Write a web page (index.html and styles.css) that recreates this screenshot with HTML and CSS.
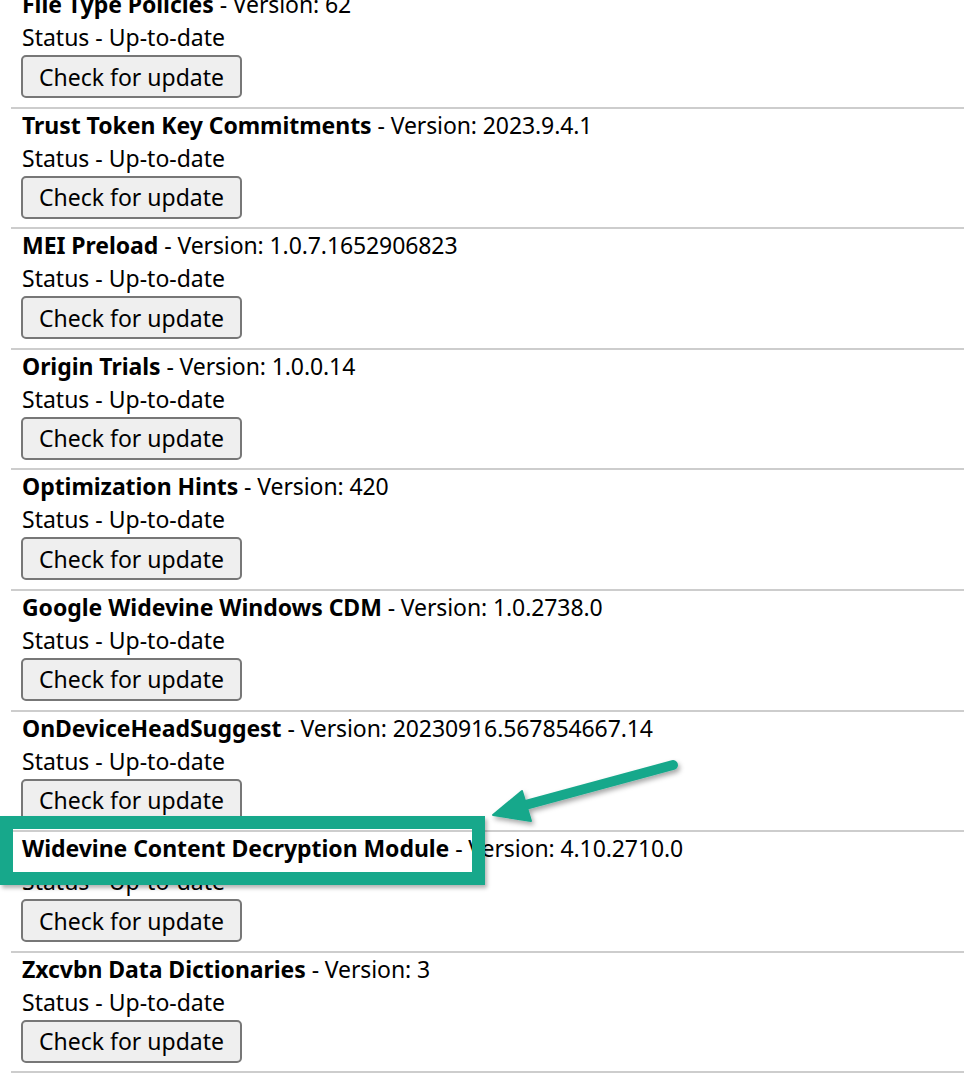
FILE: index.html
```html
<!DOCTYPE html>
<html>
<head>
<meta charset="utf-8">
<link rel="stylesheet" href="styles.css">
</head>
<body>
<div class="list">
  <div class="item">
    <div class="title"><b>File Type Policies</b> - Version: 62</div>
    <div class="status">Status - Up-to-date</div>
    <button class="btn">Check for update</button>
  </div>
  <div class="item">
    <div class="title"><b>Trust Token Key Commitments</b> - Version: 2023.9.4.1</div>
    <div class="status">Status - Up-to-date</div>
    <button class="btn">Check for update</button>
  </div>
  <div class="item">
    <div class="title"><b>MEI Preload</b> - Version: 1.0.7.1652906823</div>
    <div class="status">Status - Up-to-date</div>
    <button class="btn">Check for update</button>
  </div>
  <div class="item">
    <div class="title"><b>Origin Trials</b> - Version: 1.0.0.14</div>
    <div class="status">Status - Up-to-date</div>
    <button class="btn">Check for update</button>
  </div>
  <div class="item">
    <div class="title"><b>Optimization Hints</b> - Version: 420</div>
    <div class="status">Status - Up-to-date</div>
    <button class="btn">Check for update</button>
  </div>
  <div class="item">
    <div class="title"><b>Google Widevine Windows CDM</b> - Version: 1.0.2738.0</div>
    <div class="status">Status - Up-to-date</div>
    <button class="btn">Check for update</button>
  </div>
  <div class="item">
    <div class="title"><b>OnDeviceHeadSuggest</b> - Version: 20230916.567854667.14</div>
    <div class="status">Status - Up-to-date</div>
    <button class="btn">Check for update</button>
  </div>
  <div class="item">
    <div class="title"><b>Widevine Content Decryption Module</b> - Version: 4.10.2710.0</div>
    <div class="status">Status - Up-to-date</div>
    <button class="btn">Check for update</button>
  </div>
  <div class="item">
    <div class="title"><b>Zxcvbn Data Dictionaries</b> - Version: 3</div>
    <div class="status">Status - Up-to-date</div>
    <button class="btn">Check for update</button>
  </div>
</div>

<div class="frame"></div>
<svg class="arrow" width="964" height="1076" viewBox="0 0 964 1076">
  <defs>
    <filter id="sh" x="-20%" y="-50%" width="140%" height="200%">
      <feDropShadow dx="2" dy="3" stdDeviation="2.5" flood-color="#000" flood-opacity="0.35"/>
    </filter>
  </defs>
  <g filter="url(#sh)" fill="#17a88b" stroke="#17a88b">
    <line x1="673" y1="765" x2="518" y2="807" stroke-width="10" stroke-linecap="round"/>
    <polygon points="493,815 522,791 531,821" stroke-width="2" stroke-linejoin="round"/>
  </g>
</svg>
</body>
</html>
```
FILE: styles.css
```css
html, body {
  margin: 0;
  padding: 0;
  background: #fff;
  overflow: hidden;
}
body {
  font-family: "Noto Sans", "Open Sans", sans-serif;
  color: #000;
  font-size: 23px;
  position: relative;
  width: 964px;
  height: 1076px;
}
.list {
  margin-top: -12px;
  margin-left: 11px;
}
.item {
  padding: 0 0 8.6px 11px;
  border-bottom: 2px solid #cdcdcd;
  display: flex;
  flex-direction: column;
  align-items: flex-start;
}
.title {
  height: 33px;
  line-height: 33px;
  white-space: nowrap;
  letter-spacing: -0.1px;
}
.title b {
  font-weight: 700;
  letter-spacing: -0.05px;
}
.status {
  height: 32px;
  line-height: 32px;
}
.btn {
  box-sizing: border-box;
  margin: 2px 0 0 -1px;
  width: 221px;
  height: 43px;
  font-family: inherit;
  font-size: 23px;
  color: #000;
  background: #efefef;
  border: 2px solid #777;
  border-radius: 5px;
  padding: 0;
}
.frame {
  position: absolute;
  left: 0;
  top: 816px;
  width: 459px;
  height: 43px;
  border: 13px solid #17a88b;
  box-shadow: 2px 3px 4px rgba(0,0,0,0.3);
}
.arrow {
  position: absolute;
  left: 0;
  top: 0;
  pointer-events: none;
}
```
